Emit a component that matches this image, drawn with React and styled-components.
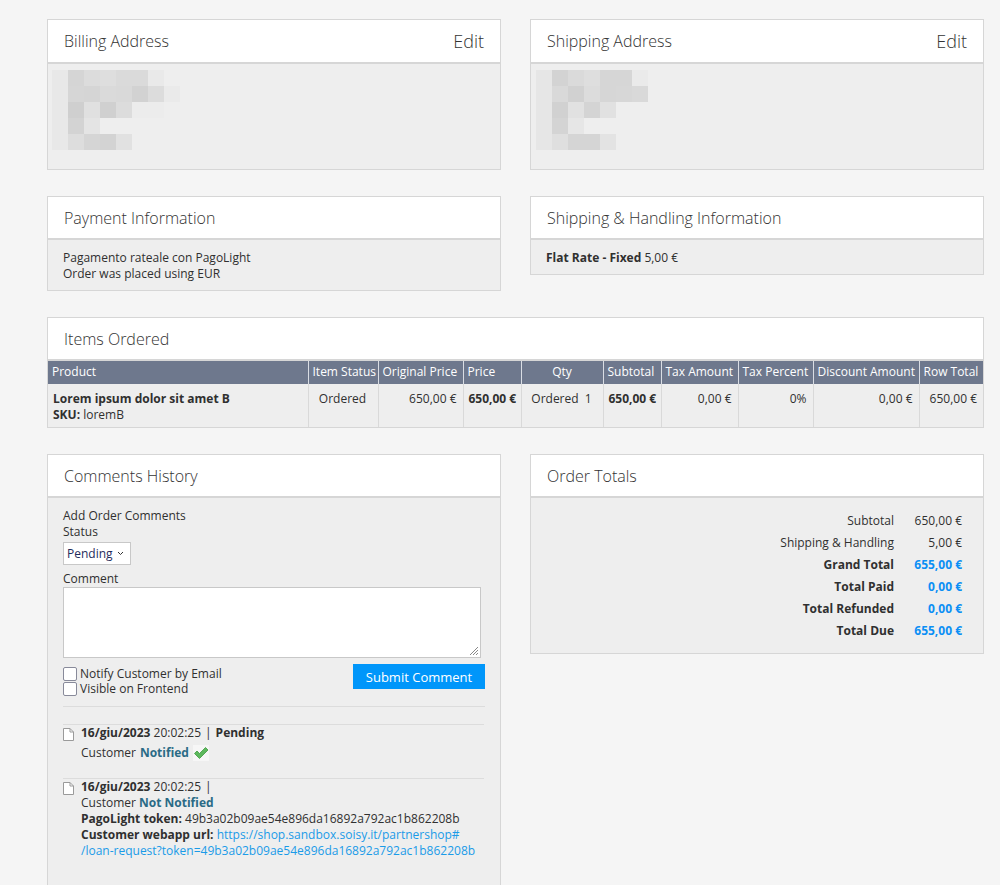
import React from 'react';
import styled, { createGlobalStyle } from 'styled-components';

const Global = createGlobalStyle`
  html, body { margin: 0; padding: 0; background: #f5f5f5; }
  body { font-family: "Open Sans", "Noto Sans", sans-serif; color: #303030; font-size: 12px; line-height: 16px; }
`;

const Page = styled.div`
  width: 937px;
  padding: 19px 0 0 47px;
  display: grid;
  grid-template-columns: 1fr 1fr;
  column-gap: 29px;
  row-gap: 26px;
  align-items: start;
`;

const Panel = styled.section`
  border: 1px solid #d6d6d6;
  background: #eeeeee;
  grid-column: ${p => (p.$wide ? '1 / -1' : 'auto')};
`;

const Head = styled.header`
  background: #fff;
  border-bottom: 2px solid #d6d6d6;
  height: ${p => p.$h || 41}px;
  padding: 0 16px;
  display: flex;
  align-items: center;
  justify-content: space-between;
  font-size: 16px;
  font-weight: 300;
  color: #333;
`;

const EditLink = styled.span`
  font-size: 18px;
  font-weight: 300;
`;

const Body = styled.div`
  padding: ${p => p.$pad || '10px 15px 8px'};
`;

const Mosaic = styled.div`
  display: grid;
  grid-template-columns: repeat(8, 16px);
  grid-auto-rows: 16px;
`;

const Cell = styled.div`
  background: ${p => p.$c};
`;

const Strong = styled.b`
  font-weight: 700;
`;

const Table = styled.table`
  width: 100%;
  border-collapse: collapse;
  table-layout: fixed;
`;

const Th = styled.th`
  background: #6e788d;
  color: #fff;
  font-weight: 400;
  text-align: ${p => p.$align || 'left'};
  padding: 3px 4px 4px;
  height: 16px;
  border-left: 1px solid #d9dde4;
  white-space: nowrap;
  &:first-child { border-left: none; }
`;

const Td = styled.td`
  vertical-align: top;
  text-align: ${p => p.$align || 'left'};
  padding: 7px 6px 4px 5px;
  border-left: 1px solid #d9d9d9;
  font-weight: ${p => (p.$bold ? 700 : 400)};
  white-space: nowrap;
  &:first-child { border-left: none; }
`;

const Field = styled.div`
  display: flex;
  flex-direction: column;
  align-items: flex-start;
`;

const FieldLabel = styled.div`
  margin-top: ${p => p.$mt || 0}px;
`;

const Select = styled.div`
  margin-top: 2px;
  height: 23px;
  width: 68px;
  background: #fff;
  border: 1px solid #c8c8c8;
  display: flex;
  align-items: center;
  justify-content: space-between;
  padding: 0 6px 0 3px;
  box-sizing: border-box;
  color: #1f2c5c;
  font-size: 12px;
`;

const TextArea = styled.div`
  width: 418px;
  height: 71px;
  background: #fff;
  border: 1px solid #c8c8c8;
  box-sizing: border-box;
  position: relative;
`;

const Grip = styled.svg`
  position: absolute;
  right: 1px;
  bottom: 1px;
`;

const Actions = styled.div`
  display: flex;
  justify-content: space-between;
  align-items: flex-start;
  margin-top: 6px;
  padding-bottom: 10px;
  border-bottom: 1px solid #dcdcdc;
  width: 422px;
`;

const Checks = styled.div`
  display: flex;
  flex-direction: column;
  padding-top: 2px;
`;

const CheckRow = styled.label`
  display: flex;
  align-items: center;
  gap: 3px;
  font-size: 12px;
  line-height: 15px;
`;

const Box = styled.span`
  width: 12px;
  height: 12px;
  border: 1px solid #888a9a;
  border-radius: 2px;
  background: #fff;
  display: inline-block;
`;

const Button = styled.button`
  width: 132px;
  height: 25px;
  border: none;
  background: #0096fa;
  color: #fff;
  font-family: inherit;
  font-size: 13px;
  padding: 0;
`;

const History = styled.ul`
  list-style: none;
  margin: 17px 0 0;
  padding: 0;
  width: 421px;
`;

const Entry = styled.li`
  border-top: 1px solid #dcdcdc;
  padding: 0 0 ${p => p.$pb || 17}px;
  display: flex;
  gap: 7px;
`;

const DocIcon = styled.svg`
  flex: none;
  margin-top: 3px;
`;

const EntryText = styled.div`
  display: flex;
  flex-direction: column;
`;

const Line = styled.div`
  margin-top: ${p => p.$mt || 0}px;
  display: flex;
  align-items: center;
  gap: 4px;
`;

const Sep = styled.span`
  margin: 0 4px;
`;

const Notified = styled.span`
  color: #2a6b86;
  font-weight: 700;
`;

const Link = styled.a`
  color: #1a9be8;
  font-weight: 400;
  text-decoration: none;
`;

const Totals = styled.table`
  margin: 12px 21px 11px auto;
  border-collapse: collapse;
`;

const TLabel = styled.td`
  text-align: right;
  height: 22px;
  padding: 0;
  font-weight: ${p => (p.$bold ? 700 : 400)};
`;

const TValue = styled.td`
  text-align: right;
  padding: 0 0 0 20px;
  min-width: 48px;
  font-weight: ${p => (p.$bold ? 700 : 400)};
  color: ${p => (p.$bold ? '#0b8ff5' : '#303030')};
`;

const bg = '#eeeeee';
const billing = [
  ['#e8e8e8', '#d5d5d5', '#dcdcdc', '#dedede', '#dadada', '#dadada', '#e9e9e9', bg],
  ['#e8e8e8', '#d6d6d6', '#d5d5d5', '#dadada', '#d9d9d9', '#d2d2d2', '#dcdcdc', '#eaeaea'],
  ['#e8e8e8', '#cfcfcf', '#e0e0e0', '#d0d0d0', '#dcdcdc', '#ececec', '#ececec', bg],
  ['#e8e8e8', '#d3d3d3', '#e4e4e4', bg, bg, bg, bg, bg],
  ['#e8e8e8', '#dddddd', '#d5d5d5', '#d3d3d3', '#e1e1e1', bg, bg, bg],
];
const shipping = [
  ['#e6e6e6', '#d3d3d3', '#dadada', '#dedede', '#d6d6d6', '#d6d6d6', '#eaeaea', bg],
  ['#e6e6e6', '#d9d9d9', '#d1d1d1', '#dcdcdc', '#d6d6d6', '#d7d7d7', '#d9d9d9', bg],
  ['#e6e6e6', '#d1d1d1', '#e1e1e1', '#d4d4d4', '#e1e1e1', bg, bg, bg],
  ['#e6e6e6', '#d4d4d4', '#e6e6e6', bg, bg, bg, bg, bg],
  ['#e6e6e6', '#dfdfdf', '#d5d5d5', '#d5d5d5', '#e3e3e3', bg, bg, bg],
];

function Blur({ rows }) {
  return (
    <Mosaic>
      {rows.flat().map((c, i) => <Cell key={i} $c={c} />)}
    </Mosaic>
  );
}

const Doc = () => (
  <DocIcon width="11" height="13" viewBox="0 0 11 13">
    <path d="M0.5 0.5 H7 L10.5 4 V12.5 H0.5 Z" fill="#fff" stroke="#9a9a9a" />
    <path d="M7 0.5 V4 H10.5" fill="none" stroke="#9a9a9a" />
  </DocIcon>
);

const Check = () => (
  <svg width="16" height="16" viewBox="0 0 16 16">
    <rect width="16" height="16" fill="#f6f6f6" />
    <path d="M1.5 8.5 L4 6 L6.5 8.5 L12.5 2.5 L15 5 L6.5 13.5 Z" fill="#5cb85c" stroke="#3f9a3f" strokeWidth="0.8" />
  </svg>
);

const cols = [
  ['Product', 260], ['Item Status', 70], ['Original Price', 85], ['Price', 58], ['Qty', 82, 'center'],
  ['Subtotal', 58], ['Tax Amount', 77], ['Tax Percent', 75], ['Discount Amount', 106], ['Row Total'],
];

export default function App() {
  return (
    <>
      <Global />
      <Page>
        <Panel>
          <Head $h={42}>Billing Address<EditLink>Edit</EditLink></Head>
          <Body $pad="6px 4px 19px">
            <Blur rows={billing} />
          </Body>
        </Panel>
        <Panel>
          <Head $h={42}>Shipping Address<EditLink>Edit</EditLink></Head>
          <Body $pad="6px 4px 19px 5px">
            <Blur rows={shipping} />
          </Body>
        </Panel>

        <Panel>
          <Head>Payment Information</Head>
          <Body>
            <div>Pagamento rateale con PagoLight</div>
            <div>Order was placed using EUR</div>
          </Body>
        </Panel>
        <Panel>
          <Head>Shipping &amp; Handling Information</Head>
          <Body>
            <Strong>Flat Rate - Fixed</Strong> 5,00 €
          </Body>
        </Panel>

        <Panel $wide>
          <Head>Items Ordered</Head>
          <Table>
            <colgroup>
              {cols.map(([n, w]) => <col key={n} style={w ? { width: w } : undefined} />)}
            </colgroup>
            <thead>
              <tr>
                {cols.map(([n, , a]) => <Th key={n} $align={a}>{n}</Th>)}
              </tr>
            </thead>
            <tbody>
              <tr>
                <Td>
                  <Strong>Lorem ipsum dolor sit amet B</Strong><br />
                  <Strong>SKU:</Strong> loremB
                </Td>
                <Td $align="center">Ordered</Td>
                <Td $align="right">650,00 €</Td>
                <Td $align="right" $bold>650,00 €</Td>
                <Td $align="center">Ordered&nbsp;&nbsp;1</Td>
                <Td $align="right" $bold>650,00 €</Td>
                <Td $align="right">0,00 €</Td>
                <Td $align="right">0%</Td>
                <Td $align="right">0,00 €</Td>
                <Td $align="right">650,00 €</Td>
              </tr>
            </tbody>
          </Table>
        </Panel>

        <Panel>
          <Head>Comments History</Head>
          <Body $pad="10px 15px 21px">
            <Field>
              <div>Add Order Comments</div>
              <div>Status</div>
              <Select>
                <span>Pending</span>
                <svg width="7" height="5" viewBox="0 0 7 5"><path d="M1 1 L3.5 3.5 L6 1" fill="none" stroke="#333" strokeWidth="1" /></svg>
              </Select>
              <FieldLabel $mt={6}>Comment</FieldLabel>
              <TextArea>
                <Grip width="11" height="11" viewBox="0 0 11 11">
                  <path d="M10 2 L2 10 M10 5 L5 10 M10 8 L8 10" stroke="#888" strokeWidth="1" />
                </Grip>
              </TextArea>
            </Field>
            <Actions>
              <Checks>
                <CheckRow><Box />Notify Customer by Email</CheckRow>
                <CheckRow><Box />Visible on Frontend</CheckRow>
              </Checks>
              <Button>Submit Comment</Button>
            </Actions>
            <History>
              <Entry>
                <Doc />
                <EntryText>
                  <Line><span><Strong>16/giu/2023</Strong> 20:02:25<Sep>|</Sep><Strong>Pending</Strong></span></Line>
                  <Line $mt={4}>Customer <Notified>Notified</Notified><Check /></Line>
                </EntryText>
              </Entry>
              <Entry $pb={0}>
                <Doc />
                <EntryText>
                  <Line><span><Strong>16/giu/2023</Strong> 20:02:25<Sep>|</Sep></span></Line>
                  <div>Customer <Notified>Not Notified</Notified></div>
                  <div><Strong>PagoLight token:</Strong> 49b3a02b09ae54e896da16892a792ac1b862208b</div>
                  <div>
                    <Strong>Customer webapp url:</Strong> <Link href="#">https://shop.sandbox.soisy.it/partnershop#</Link><br />
                    <Link href="#">/loan-request?token=49b3a02b09ae54e896da16892a792ac1b862208b</Link>
                  </div>
                </EntryText>
              </Entry>
            </History>
          </Body>
        </Panel>
        <Panel>
          <Head>Order Totals</Head>
          <Totals>
            <tbody>
              <tr><TLabel>Subtotal</TLabel><TValue>650,00 €</TValue></tr>
              <tr><TLabel>Shipping &amp; Handling</TLabel><TValue>5,00 €</TValue></tr>
              <tr><TLabel $bold>Grand Total</TLabel><TValue $bold>655,00 €</TValue></tr>
              <tr><TLabel $bold>Total Paid</TLabel><TValue $bold>0,00 €</TValue></tr>
              <tr><TLabel $bold>Total Refunded</TLabel><TValue $bold>0,00 €</TValue></tr>
              <tr><TLabel $bold>Total Due</TLabel><TValue $bold>655,00 €</TValue></tr>
            </tbody>
          </Totals>
        </Panel>
      </Page>
    </>
  );
}
